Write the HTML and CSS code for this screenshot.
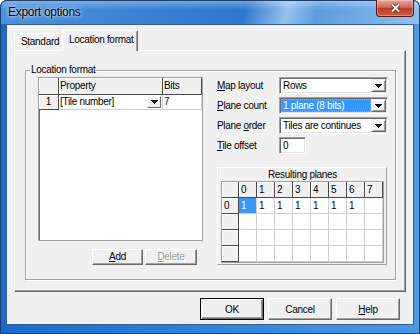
FILE: index.html
```html
<!DOCTYPE html>
<html lang="en">
<head>
  <meta charset="UTF-8" />
  <title>Export options</title>
  <link rel="stylesheet" href="styles.css">
</head>
<body>
  <div class="window">

    <!-- barra de título -->
    <div class="titlebar">
      <span class="title">Export options</span>
      <button class="close" aria-label="Close">
        <svg width="11" height="10" viewBox="0 0 11 10">
          <path d="M2 1.5l7 7M9 1.5l-7 7" stroke="#4a120a" stroke-width="3.4" fill="none"/>
          <path d="M2 1.5l7 7M9 1.5l-7 7" stroke="#fff" stroke-width="2" fill="none"/>
        </svg>
      </button>
    </div>

    <div class="client">
      <div class="tabs">
        <div class="tab">Standard</div>
        <div class="tab active">Location format</div>
      </div>

      <div class="pane">
        <div class="group">
          <div class="group-title">Location format</div>
          <div class="group-body">

            <!-- columna izquierda: tabla de propiedades -->
            <div class="left">
              <div class="datagrid">
                <div class="f"></div>
                <div class="f">Property</div>
                <div class="f">Bits</div>
                <div class="f num">1</div>
                <div class="c prop">
                  <span>[Tile number]</span>
                  <span class="cell-drop"><svg width="7" height="4" viewBox="0 0 7 4"><path d="M0 0h7v1h-1v1h-1v1h-1v1h-1v-1h-1v-1h-1v-1h-1z"/></svg></span>
                </div>
                <div class="c">7</div>
              </div>
              <div class="grid-buttons">
                <button class="btn add"><u>A</u>dd</button>
                <button class="btn del" disabled><u>D</u>elete</button>
              </div>
            </div>

            <!-- columna derecha: opciones -->
            <div class="right">
              <div class="form">
                <label><u>M</u>ap layout</label>
                <div class="combo">
                  <span class="combo-text">Rows</span>
                  <span class="drop"><svg width="7" height="4" viewBox="0 0 7 4"><path d="M0 0h7v1h-1v1h-1v1h-1v1h-1v-1h-1v-1h-1v-1h-1z"/></svg></span>
                </div>
                <label><u>P</u>lane count</label>
                <div class="combo">
                  <span class="combo-text selected">1 plane (8 bits)</span>
                  <span class="drop"><svg width="7" height="4" viewBox="0 0 7 4"><path d="M0 0h7v1h-1v1h-1v1h-1v1h-1v-1h-1v-1h-1v-1h-1z"/></svg></span>
                </div>
                <label>Plane <u>o</u>rder</label>
                <div class="combo">
                  <span class="combo-text">Tiles are continues</span>
                  <span class="drop"><svg width="7" height="4" viewBox="0 0 7 4"><path d="M0 0h7v1h-1v1h-1v1h-1v1h-1v-1h-1v-1h-1v-1h-1z"/></svg></span>
                </div>
                <label><u>T</u>ile offset</label>
                <div class="edit">0</div>
              </div>

              <div class="planes">
                <div class="planes-title">Resulting planes</div>
                <div class="planes-grid">
                  <div class="f"></div><div class="f">0</div><div class="f">1</div><div class="f">2</div><div class="f">3</div><div class="f">4</div><div class="f">5</div><div class="f">6</div><div class="f">7</div>
                  <div class="f">0</div><div class="c sel">1</div><div class="c">1</div><div class="c">1</div><div class="c">1</div><div class="c">1</div><div class="c">1</div><div class="c">1</div><div class="c"></div>
                  <div class="f"></div><div class="c"></div><div class="c"></div><div class="c"></div><div class="c"></div><div class="c"></div><div class="c"></div><div class="c"></div><div class="c"></div>
                  <div class="f"></div><div class="c"></div><div class="c"></div><div class="c"></div><div class="c"></div><div class="c"></div><div class="c"></div><div class="c"></div><div class="c"></div>
                  <div class="f"></div><div class="c"></div><div class="c"></div><div class="c"></div><div class="c"></div><div class="c"></div><div class="c"></div><div class="c"></div><div class="c"></div>
                </div>
              </div>
            </div>

          </div>
        </div>
      </div>

      <div class="buttons">
        <button class="btn default">OK</button>
        <button class="btn">Cancel</button>
        <button class="btn"><u>H</u>elp</button>
      </div>
    </div>
  </div>
</body>
</html>
```

FILE: styles.css
```css
/* === Reset === */
* { margin:0; padding:0; box-sizing:border-box; }
html, body { width:420px; height:334px; overflow:hidden; background:#fff; }
body {
  font-family: "Liberation Sans", Arial, sans-serif;
  font-size: 10px;
  letter-spacing: -0.3px;
  color: #000;
}
button { font: inherit; letter-spacing: inherit; color: inherit; }

/* === Ventana (marco Aero) === */
.window {
  width: 420px; height: 334px;
  display: flex; flex-direction: column;
  padding: 0 6px 9px;
  background: linear-gradient(to right, #1a6acc, #2b82da 45%, #4b98e2);
  border-radius: 7px 7px 0 0;
  box-shadow: inset 0 0 0 1px #1c3f70;
  overflow: hidden;
}
.titlebar {
  flex: none;
  height: 24px;
  margin: 0 -6px;
  padding-left: 8px;
  display: flex; align-items: flex-start;
  background:
    linear-gradient(to bottom, rgba(255,255,255,0.35), rgba(255,255,255,0) 40%),
    linear-gradient(105deg, #4c91dc 0%, #3d84d5 30%, #2e77cf 58%, #96c2ec 68%, #5e9ce0 75%, #79b0e8 90%, #92c2ee 100%);
  border-radius: 7px 7px 0 0;
  box-shadow: inset 0 1px 0 #1c3f70, inset 1px 0 0 #1c3f70, inset -1px 0 0 #1c3f70;
}
.title {
  font-size: 12px;
  line-height: 24px;
  letter-spacing: -0.3px;
  text-shadow: 0 0 5px rgba(255,255,255,0.9), 0 0 2px rgba(255,255,255,0.8);
}
.close {
  margin-left: auto; margin-right: 6px;
  width: 38px; height: 17px;
  display: flex; align-items: center; justify-content: center;
  border: 1px solid #5a1a12; border-top: none;
  border-radius: 0 0 4px 4px;
  background: linear-gradient(to bottom, #e7a397, #d46a58 45%, #bf3b2a 52%, #cf5a45);
  box-shadow: inset 0 0 0 1px rgba(255,255,255,0.3);
}

/* === Área cliente === */
.client {
  flex: 1;
  display: flex; flex-direction: column;
  padding: 5px 7px 4px;
  background: #f0f0f0;
  border: 1px solid #3a5f8c;
}

/* === Pestañas === */
.tabs {
  height: 20px;
  display: flex; align-items: flex-end;
  position: relative; z-index: 1;
}
.tab {
  height: 17px;
  padding: 1px 0 0 6px;
  line-height: 14px;
  background: #f0f0f0;
  border-top: 1px solid #fff;
  border-left: 1px solid #fff;
  border-radius: 2px 2px 0 0;
}
.tab:first-child { width: 48px; }
.tab.active {
  width: 76px; height: 21px;
  margin-bottom: -1px;
  padding-top: 2px;
  border-right: 1px solid #696969;
  box-shadow: inset -1px 0 0 #a0a0a0;
}
.pane {
  height: 242px;
  padding: 19px 9px 11px 10px;
  border: 1px solid;
  border-color: #fff #696969 #696969 #fff;
  box-shadow: inset -1px -1px 0 #a0a0a0;
}

/* === Grupo "Location format" === */
.group {
  height: 210px;
  border: 1px solid #a0a0a0;
  box-shadow: 1px 1px 0 #fff, inset 1px 1px 0 #fff;
}
.group-title {
  width: max-content;
  margin: -7px 0 0 4px;
  padding: 0 1px;
  line-height: 12px;
  background: #f0f0f0;
}
.group-body {
  display: flex; gap: 14px;
  padding: 1px 7px 0 12px;
}
.left { width: 165px; }
.right { width: 171px; }

/* === Rejillas === */
.datagrid,
.planes-grid {
  display: grid;
  background: #fff;
  border: 1px solid #a0a0a0;
  box-shadow: inset 1px 1px 0 #696969;
}
.datagrid {
  height: 164px;
  grid-template-columns: 20px 104px 39px;
  grid-template-rows: 17px 15px 1fr;
}
.planes-grid {
  width: 163px;
  grid-template-columns: 17px repeat(8, 18px);
  grid-template-rows: repeat(5, 16px);
}
.f, .c {
  padding-left: 2px;
  line-height: 15px;
  white-space: nowrap;
  overflow: hidden;
}
.f {
  background: #f0f0f0;
  border-right: 1px solid #4a4a4a;
  border-bottom: 1px solid #4a4a4a;
  box-shadow: inset 1px 1px 0 #fff;
}
.c {
  border-right: 1px solid #d0d0d0;
  border-bottom: 1px solid #d0d0d0;
}
.datagrid .f { line-height: 16px; padding-left: 1px; }
.datagrid .num { text-align: center; line-height: 14px; padding: 0; }
.datagrid .c { line-height: 14px; padding-left: 1px; }
.c.sel { background: #3399ff; color: #fff; }
.prop { display: flex; align-items: center; justify-content: space-between; padding-right: 1px; }
.cell-drop {
  width: 14px; height: 12px;
  display: flex; align-items: center; justify-content: center;
  background: #f0f0f0;
  border: 1px solid;
  border-color: #fff #696969 #696969 #fff;
}

/* === Botones === */
.btn {
  width: 64px; height: 22px;
  background: #f0f0f0;
  border: 1px solid;
  border-color: #fff #696969 #696969 #fff;
  box-shadow: inset -1px -1px 0 #a0a0a0;
}
.btn.default {
  border-color: #000;
  box-shadow: inset 1px 1px 0 #fff, inset -1px -1px 0 #696969, inset -2px -2px 0 #a0a0a0;
}
.btn:disabled { color: #a0a0a0; text-shadow: 1px 1px 0 #fff; }
.grid-buttons {
  margin-top: 8px;
  display: flex; justify-content: flex-end; gap: 2px;
  padding-right: 6px;
}
.grid-buttons .btn { height: 16px; line-height: 12px; }
.add { width: 51px; }
.del { width: 52px; }
.buttons {
  margin-top: 6px;
  display: flex; justify-content: flex-end; gap: 4px;
  padding-right: 6px;
}

/* === Formulario derecho === */
.form {
  display: grid;
  grid-template-columns: 62px 109px;
  grid-auto-rows: 17px;
  row-gap: 3px;
}
.form label { line-height: 17px; }
.combo, .edit {
  height: 17px;
  background: #fff;
  border: 1px solid;
  border-color: #a0a0a0 #fff #fff #a0a0a0;
  box-shadow: inset 1px 1px 0 #696969, inset -1px -1px 0 #e3e3e3;
  padding: 1px;
}
.combo { display: flex; }
.combo-text {
  flex: 1;
  padding-left: 2px;
  line-height: 13px;
  white-space: nowrap;
}
.combo-text.selected {
  background: #3399ff;
  color: #fff;
  outline: 1px dotted #d7a04a;
  outline-offset: -1px;
}
.drop {
  width: 15px;
  display: flex; align-items: center; justify-content: center;
  background: #f0f0f0;
  border: 1px solid;
  border-color: #f0f0f0 #696969 #696969 #f0f0f0;
  box-shadow: inset 1px 1px 0 #fff, inset -1px -1px 0 #a0a0a0;
}
.edit { width: 27px; padding-left: 3px; line-height: 13px; }

/* === Panel "Resulting planes" === */
.planes {
  width: 170px;
  margin-top: 13px;
  padding: 0 2px 1px 3px;
  border: 1px solid;
  border-color: #fff #a0a0a0 #a0a0a0 #fff;
}
.planes-title {
  text-align: center;
  line-height: 13px;
}
```
